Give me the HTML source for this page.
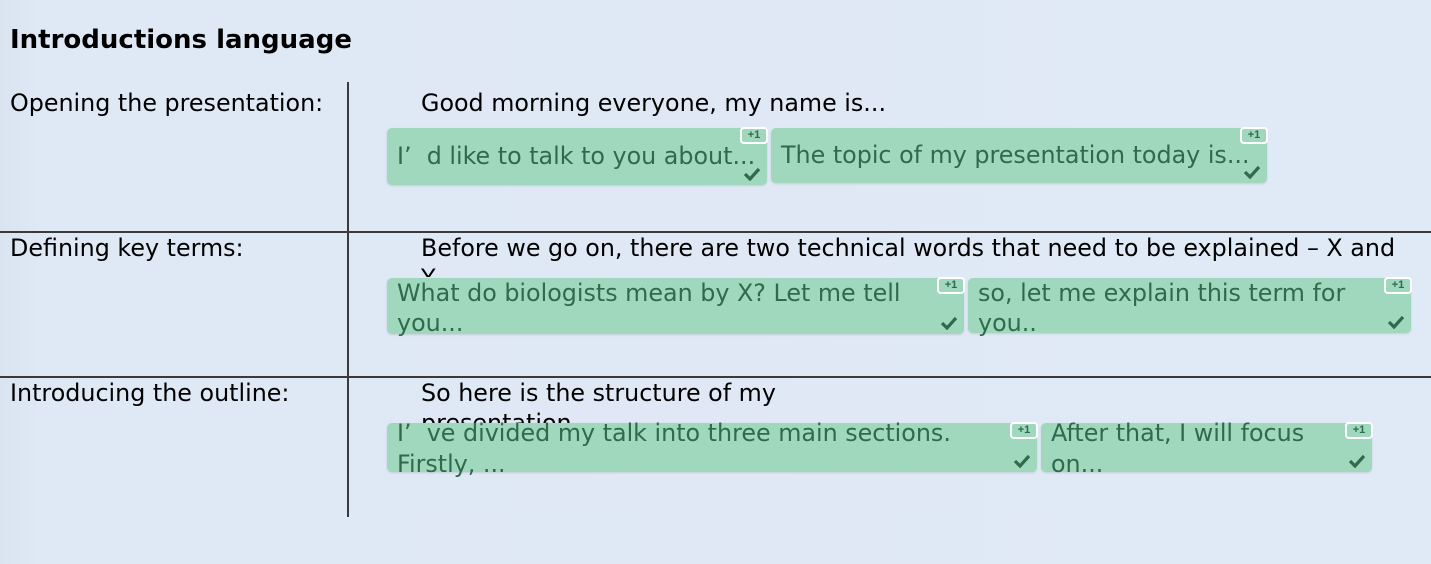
<!DOCTYPE html>
<html><head><meta charset="utf-8"><style>
body{margin:0;width:1431px;height:564px;overflow:hidden;background:linear-gradient(90deg,#dae4f1 0,#dfe8f5 40px,#e0e9f6 100%);font-family:"DejaVu Sans","Liberation Sans",sans-serif;position:relative}
.a{position:absolute;white-space:nowrap}
.t{left:10px;top:25px;font-size:26px;font-weight:bold;color:#000}
.l{font-size:23.8px;color:#000;left:10px}
.m{font-size:23.8px;color:#000;left:421px}
.hl{position:absolute;left:0;width:1431px;height:2px;background:#3a3a3a}
.vl{position:absolute;left:347px;top:82px;width:2px;height:435px;background:#3a3a3a}
.c{position:absolute;background:#9fd8bc;border-radius:5px;box-shadow:0 1px 2px rgba(0,0,0,.12);color:#2f6a4c;font-size:23.8px;line-height:30px;padding:0 10px;box-sizing:border-box;overflow:visible;white-space:normal}
.b{position:absolute;right:-1px;top:-1px;width:28px;height:17px;border:2px solid #fff;border-radius:4px;background:#9fd8bc;box-sizing:border-box;font-size:11px;font-weight:bold;color:#2f6a4c;line-height:13px;text-align:center;font-family:"Liberation Sans",sans-serif}
.k{position:absolute;right:6px;bottom:4px;width:18px;height:14px}
</style></head><body>
<div class="a t">Introductions language</div>
<div class="vl"></div>
<div class="hl" style="top:231px"></div>
<div class="hl" style="top:376px"></div>
<div class="a l" style="top:89px">Opening the presentation:</div>
<div class="a l" style="top:234px">Defining key terms:</div>
<div class="a l" style="top:379px">Introducing the outline:</div>
<div class="a m" style="top:89px">Good morning everyone, my name is...</div>
<div class="a m" style="top:234px">Before we go on, there are two technical words that need to be explained – X and</div>
<div class="a m" style="top:264px;height:13px;overflow:hidden">Y</div>
<div class="a m" style="top:379px">So here is the structure of my</div>
<div class="a m" style="top:409px;height:14px;overflow:hidden">presentation</div>

<div class="c" style="left:387px;top:128px;width:380px;height:57px;padding-top:13px;white-space:nowrap">I’&nbsp; d like to talk to you about...<div class="b">+1</div><svg class="k" viewBox="0 0 18 14"><path d="M2 7l5 5 9-10" stroke="#2f6a4c" stroke-width="3.2" fill="none"/></svg></div>
<div class="c" style="left:771px;top:128px;width:496px;height:55px;padding-top:12px;white-space:nowrap">The topic of my presentation today is...<div class="b">+1</div><svg class="k" viewBox="0 0 18 14"><path d="M2 7l5 5 9-10" stroke="#2f6a4c" stroke-width="3.2" fill="none"/></svg></div>

<div class="c" style="left:387px;top:278px;width:577px;height:56px;padding-top:0;padding-right:50px">What do biologists mean by X? Let me tell you...<div class="b">+1</div><svg class="k" viewBox="0 0 18 14"><path d="M2 7l5 5 9-10" stroke="#2f6a4c" stroke-width="3.2" fill="none"/></svg></div>
<div class="c" style="left:968px;top:278px;width:443px;height:55px;padding-top:0;padding-right:50px">so, let me explain this term for you..<div class="b">+1</div><svg class="k" viewBox="0 0 18 14"><path d="M2 7l5 5 9-10" stroke="#2f6a4c" stroke-width="3.2" fill="none"/></svg></div>

<div class="c" style="left:387px;top:423px;width:650px;height:49px;padding-top:0;line-height:31px;padding-right:50px"><div style="margin-top:-5px">I’&nbsp; ve divided my talk into three main sections. Firstly, ...</div><div class="b">+1</div><svg class="k" viewBox="0 0 18 14"><path d="M2 7l5 5 9-10" stroke="#2f6a4c" stroke-width="3.2" fill="none"/></svg></div>
<div class="c" style="left:1041px;top:423px;width:331px;height:49px;padding-top:0;line-height:31px;padding-right:50px"><div style="margin-top:-5px">After that, I will focus on...</div><div class="b">+1</div><svg class="k" viewBox="0 0 18 14"><path d="M2 7l5 5 9-10" stroke="#2f6a4c" stroke-width="3.2" fill="none"/></svg></div>
</body></html>
